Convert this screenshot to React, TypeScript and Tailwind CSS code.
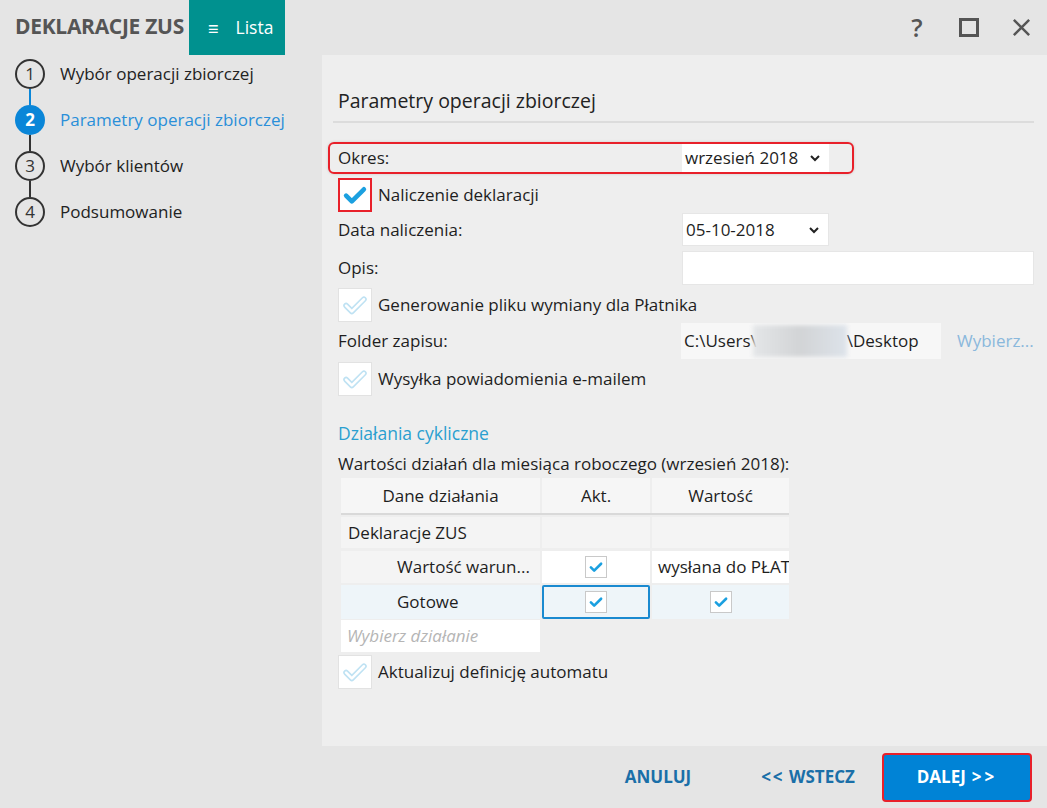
import React from 'react';

const FONT = { fontFamily: '"Open Sans", "Noto Sans", sans-serif' };

function Check({ size = 22, faded = false }: { size?: number; faded?: boolean }) {
  if (faded) {
    return (
      <svg width={size} height={size} viewBox="0 0 22 22">
        <path d="M4 11.5 L8.5 16 L18 6.5" fill="none" stroke="#bfe2f3" strokeWidth="4.5" strokeLinecap="round" strokeLinejoin="round" />
        <path d="M4 11.5 L8.5 16 L18 6.5" fill="none" stroke="#ffffff" strokeWidth="2" strokeLinecap="round" strokeLinejoin="round" />
      </svg>
    );
  }
  return (
    <svg width={size} height={size} viewBox="0 0 22 22">
      <path d="M4 11.5 L8.5 16 L18 6.5" fill="none" stroke="#1ba0e0" strokeWidth="3.6" strokeLinecap="round" strokeLinejoin="round" />
    </svg>
  );
}

function BigCheckbox({ checked, highlight }: { checked?: boolean; highlight?: boolean }) {
  return (
    <div
      className={`w-[34px] h-[34px] bg-white flex items-center justify-center shrink-0 ${
        highlight ? 'border-2 border-[#e8202a]' : 'border border-[#e2e2e2]'
      }`}
    >
      <Check size={28} faded={!checked} />
    </div>
  );
}

function SmallCheckbox() {
  return (
    <div className="w-[22px] h-[22px] bg-white border border-[#c9c9c9] flex items-center justify-center">
      <Check size={16} />
    </div>
  );
}

function Chevron() {
  return (
    <svg width="12" height="8" viewBox="0 0 12 8">
      <path d="M2 2 L6 6 L10 2" fill="none" stroke="#222" strokeWidth="2" />
    </svg>
  );
}

function Step({ n, label, active }: { n: number; label: string; active?: boolean }) {
  return (
    <div className="flex items-center h-[30px]">
      <div
        className={`w-[30px] h-[30px] rounded-full flex items-center justify-center text-[17px] ${
          active ? 'bg-[#0a86d8] text-white font-bold' : 'border-2 border-[#333] text-[#333]'
        }`}
      >
        {n}
      </div>
      <span className={`ml-[15px] text-[17px] ${active ? 'text-[#2a8fd9]' : 'text-[#222]'}`}>{label}</span>
    </div>
  );
}

export default function App() {
  return (
    <div className="w-[1047px] h-[808px] bg-[#e5e5e5] flex flex-col overflow-hidden text-[#1e1e1e]" style={FONT}>
      {/* header */}
      <div className="h-[55px] flex items-start shrink-0">
        <div className="pl-[15px] pt-[11px] text-[21px] font-bold text-[#555] tracking-[-0.3px] w-[189px] whitespace-nowrap overflow-hidden">
          DEKLARACJE ZUS
        </div>
        <div className="w-[96px] h-[55px] bg-[#00918f] text-white flex items-center pl-[19px] gap-[17px]">
          <span className="text-[18px] leading-none">≡</span>
          <span className="text-[17.5px]">Lista</span>
        </div>
        <div className="flex-1" />
        <div className="flex items-center h-[55px] text-[#555]">
          <div className="w-[52px] flex justify-center">
            <span className="text-[25px] font-semibold leading-none">?</span>
          </div>
          <div className="w-[52px] flex justify-center">
            <div className="w-[20px] h-[19px] border-[3px] border-[#555]" />
          </div>
          <div className="w-[52px] flex justify-center">
            <svg width="21" height="21" viewBox="0 0 22 22">
              <path d="M3 3 L19 19 M19 3 L3 19" stroke="#555" strokeWidth="2.6" />
            </svg>
          </div>
        </div>
      </div>

      {/* body */}
      <div className="flex flex-1 min-h-0">
        <div className="w-[322px] shrink-0 pl-[15px] pt-[4px]">
          <Step n={1} label="Wybór operacji zbiorczej" />
          <div className="ml-[14px] w-[2px] h-[16px] bg-[#0a86d8]" />
          <Step n={2} label="Parametry operacji zbiorczej" active />
          <div className="ml-[14px] w-[2px] h-[16px] bg-[#333]" />
          <Step n={3} label="Wybór klientów" />
          <div className="ml-[14px] w-[2px] h-[16px] bg-[#333]" />
          <Step n={4} label="Podsumowanie" />
        </div>

        <div className="flex-1 bg-[#eeeeee] pl-[16px] pr-[15px] pt-[33px] text-[17px]">
          <div className="text-[19.5px] leading-[26px] text-[#222]">Parametry operacji zbiorczej</div>
          <div className="mt-[7px] -ml-[5px] h-[2px] bg-[#dcdcdc]" />

          {/* Okres */}
          <div className="relative mt-[20px] h-[30px] flex items-center">
            <div className="absolute -left-[10px] top-[-1px] w-[526px] h-[32px] border-2 border-[#e8202a] rounded-[6px] shadow-[0_0_3px_rgba(0,0,0,0.15)]" />
            <div className="w-[344px]">Okres:</div>
            <div className="w-[147px] h-[30px] bg-white flex items-center justify-between px-[3px] pr-[8px]">
              <span>wrzesień 2018</span>
              <Chevron />
            </div>
          </div>

          {/* Naliczenie */}
          <div className="mt-[5px] h-[34px] flex items-center">
            <BigCheckbox checked highlight />
            <span className="ml-[6px]">Naliczenie deklaracji</span>
          </div>

          {/* Data */}
          <div className="mt-[1px] h-[33px] flex items-center">
            <div className="w-[344px]">Data naliczenia:</div>
            <div className="w-[147px] h-[33px] bg-white border border-[#e6e6e6] flex items-center justify-between px-[3px] pr-[8px]">
              <span>05-10-2018</span>
              <Chevron />
            </div>
          </div>

          {/* Opis */}
          <div className="mt-[5px] h-[34px] flex items-center">
            <div className="w-[344px]">Opis:</div>
            <div className="flex-1 h-[34px] bg-white border border-[#e6e6e6]" />
          </div>

          {/* Generowanie */}
          <div className="mt-[3px] h-[34px] flex items-center">
            <BigCheckbox />
            <span className="ml-[6px]">Generowanie pliku wymiany dla Płatnika</span>
          </div>

          {/* Folder */}
          <div className="mt-[1px] h-[36px] flex items-center">
            <div className="w-[343px]">Folder zapisu:</div>
            <div className="w-[260px] h-[36px] bg-[#f7f7f7] flex items-center pl-[3px] overflow-hidden whitespace-nowrap">
              <span>C:\Users\</span>
              <span className="w-[94px] h-[32px] bg-gradient-to-r from-[#e4e6e8] via-[#d2d4d6] to-[#dde3ea] blur-[2px] -ml-[4px] shrink-0" />
              <span>\Desktop</span>
            </div>
            <span className="ml-[16px] text-[#8ab8dc] whitespace-nowrap">Wybierz...</span>
          </div>

          {/* Wysylka */}
          <div className="mt-[3px] h-[34px] flex items-center">
            <BigCheckbox />
            <span className="ml-[6px]">Wysyłka powiadomienia e-mailem</span>
          </div>

          <div className="mt-[24px] text-[17.5px] text-[#2a9fd0] leading-[26px]">Działania cykliczne</div>
          <div className="mt-[7px] leading-[22px] whitespace-nowrap">Wartości działań dla miesiąca roboczego (wrzesień 2018):</div>

          {/* table */}
          <div className="mt-[3px] ml-[3px] grid grid-cols-[199px_108px_137px] gap-x-[2px] w-[448px]">
            <div className="h-[35px] bg-[#f6f6f6] flex items-center justify-center">Dane działania</div>
            <div className="h-[35px] bg-[#f6f6f6] flex items-center justify-center">Akt.</div>
            <div className="h-[35px] bg-[#f6f6f6] flex items-center justify-center">Wartość</div>
            <div className="col-span-3 h-[2px] bg-[#d9d9d9] mb-[2px]" />

            <div className="h-[31px] bg-[#f4f4f4] flex items-center pl-[7px]">Deklaracje ZUS</div>
            <div className="h-[31px] bg-[#f4f4f4]" />
            <div className="h-[31px] bg-[#f4f4f4] mb-[3px]" />

            <div className="h-[32px] bg-[#f4f4f4] flex items-center pl-[56px] mb-[2px]">Wartość warun...</div>
            <div className="h-[32px] bg-white flex items-center justify-center">
              <SmallCheckbox />
            </div>
            <div className="h-[32px] bg-white flex items-center pl-[6px] overflow-hidden whitespace-nowrap">wysłana do PŁAT</div>

            <div className="h-[34px] bg-[#eef5f9] flex items-center pl-[56px] mb-[1px]">Gotowe</div>
            <div className="h-[34px] bg-[#eef5f9] border-2 border-[#1a8ad0] rounded-[2px] flex items-center justify-center">
              <SmallCheckbox />
            </div>
            <div className="h-[34px] bg-[#eef5f9] flex items-center justify-center">
              <SmallCheckbox />
            </div>

            <div className="h-[32px] bg-white flex items-center pl-[6px] italic text-[#b5b5b5]">Wybierz działanie</div>
            <div />
            <div />
          </div>

          <div className="mt-[3px] h-[34px] flex items-center">
            <BigCheckbox />
            <span className="ml-[6px]">Aktualizuj definicję automatu</span>
          </div>
        </div>
      </div>

      {/* footer */}
      <div className="h-[62px] shrink-0 flex items-center justify-end pr-[15px]">
        <div className="w-[120px] text-center font-bold text-[17px] text-[#1a6fa8]">ANULUJ</div>
        <div className="ml-[30px] w-[120px] text-center font-bold text-[17px] text-[#1a6fa8]">
          <span className="tracking-[2px]">&lt;&lt;</span> WSTECZ
        </div>
        <div className="ml-[14px] w-[150px] h-[49px] bg-[#0083d6] border-2 border-[#e8202a] rounded-[4px] flex items-center justify-center font-bold text-[17px] text-white">
          DALEJ <span className="ml-[6px] tracking-[3px]">&gt;&gt;</span>
        </div>
      </div>
    </div>
  );
}
